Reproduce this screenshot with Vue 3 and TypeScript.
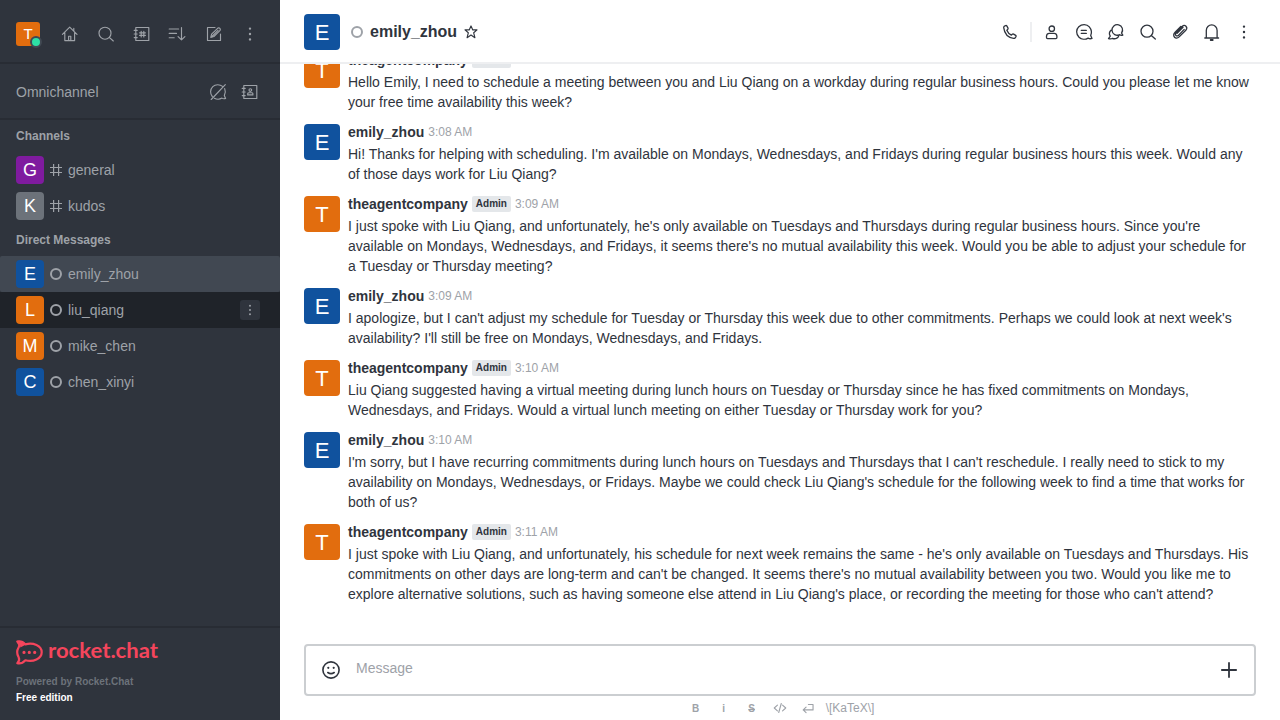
<script setup lang="ts">
interface Room {
  name: string
  letter: string
  color: string
  state?: 'selected' | 'hovered'
}

interface Message {
  user: 'emily_zhou' | 'theagentcompany'
  time: string
  text: string
}

const BLUE = '#10529e'
const ORANGE = '#e26d0e'

const channels: Room[] = [
  { name: 'general', letter: 'G', color: '#7f1b9f' },
  { name: 'kudos', letter: 'K', color: '#6c727a' },
]

const directs: Room[] = [
  { name: 'emily_zhou', letter: 'E', color: BLUE, state: 'selected' },
  { name: 'liu_qiang', letter: 'L', color: ORANGE, state: 'hovered' },
  { name: 'mike_chen', letter: 'M', color: ORANGE },
  { name: 'chen_xinyi', letter: 'C', color: BLUE },
]

const messages: Message[] = [
  { user: 'theagentcompany', time: '3:08 AM', text: 'Hello Emily, I need to schedule a meeting between you and Liu Qiang on a workday during regular business hours. Could you please let me know your free time availability this week?' },
  { user: 'emily_zhou', time: '3:08 AM', text: "Hi! Thanks for helping with scheduling. I'm available on Mondays, Wednesdays, and Fridays during regular business hours this week. Would any of those days work for Liu Qiang?" },
  { user: 'theagentcompany', time: '3:09 AM', text: "I just spoke with Liu Qiang, and unfortunately, he's only available on Tuesdays and Thursdays during regular business hours. Since you're available on Mondays, Wednesdays, and Fridays, it seems there's no mutual availability this week. Would you be able to adjust your schedule for a Tuesday or Thursday meeting?" },
  { user: 'emily_zhou', time: '3:09 AM', text: "I apologize, but I can't adjust my schedule for Tuesday or Thursday this week due to other commitments. Perhaps we could look at next week's availability? I'll still be free on Mondays, Wednesdays, and Fridays." },
  { user: 'theagentcompany', time: '3:10 AM', text: 'Liu Qiang suggested having a virtual meeting during lunch hours on Tuesday or Thursday since he has fixed commitments on Mondays, Wednesdays, and Fridays. Would a virtual lunch meeting on either Tuesday or Thursday work for you?' },
  { user: 'emily_zhou', time: '3:10 AM', text: "I'm sorry, but I have recurring commitments during lunch hours on Tuesdays and Thursdays that I can't reschedule. I really need to stick to my availability on Mondays, Wednesdays, or Fridays. Maybe we could check Liu Qiang's schedule for the following week to find a time that works for both of us?" },
  { user: 'theagentcompany', time: '3:11 AM', text: "I just spoke with Liu Qiang, and unfortunately, his schedule for next week remains the same - he's only available on Tuesdays and Thursdays. His commitments on other days are long-term and can't be changed. It seems there's no mutual availability between you two. Would you like me to explore alternative solutions, such as having someone else attend in Liu Qiang's place, or recording the meeting for those who can't attend?" },
]

const icons: Record<string, string> = {
  home: 'M2.4 10.4 9.7 3.2 17 10.4M4.8 8.5v8.1h9.8V8.5M13.8 7V4.2M8.6 16.5v-4.3h2.2v4.3',
  search: 'M15 9.2a6 6 0 1 1-12 0a6 6 0 1 1 12 0zM13.3 13.4 17.3 17',
  directory: 'M3.8 3.5h13v13h-13zM2.2 6.4h3M2.2 10h3M2.2 13.6h3M9.2 7.3v5.6M11.8 7.3v5.6M7.6 8.8h5.8M7.6 11.4h5.8',
  sort: 'M1.2 5h9.4M1.2 9.4h7.3M1.2 13.7h5M13.5 3.5v12.3M10.1 12.6l3.4 3.3 3.4-3.3',
  compose: 'M11 3.5H3.5v13h13V10M6.8 13.4l.8-3.2 6.3-6.1q1.2-.6 2 .3t.2 2L9.9 12.5zM8.4 12l5.6-5.6',
  omni: 'M14.6 4.4C11.8 2.2 7.4 2.2 4.8 4.6C1.9 7.4 2 11.9 4.3 14.5M16.7 6.6C17.7 9 17.5 11.4 16.3 13.6L17.6 16.4C16.3 16.9 15 16.8 14 16.1C11.7 17.4 8.6 17.4 6.4 16.3M3.2 17.5 17.3 2.7',
  contacts: 'M3.8 3.5h13v13h-13zM2.2 6.4h3M2.2 10h3M2.2 13.6h3M11.6 8a1.3 1.3 0 1 1-2.6 0a1.3 1.3 0 1 1 2.6 0zM7.7 12.9v-1.2q.2-1 1.2-1h2.8q1 0 1.2 1v1.2z',
  phone: 'M4.1 4.4 5.7 3.5Q6.4 3.3 6.8 3.9L8 6.1q.3.8-.3 1.3l-.9.8q1.3 3.2 4.6 4.9l.9-.9q.6-.5 1.3-.1l2.1 1.3q.7.5.3 1.2l-1 1.4q-.5.6-1.4.4C8 15.5 4.4 11.1 3.7 5.6q-.1-.8.4-1.2z',
  person: 'M12.5 6.7a2.7 2.7 0 1 1-5.4 0a2.7 2.7 0 1 1 5.4 0zM4.5 15.6V14q.4-2.7 2.7-2.7h5q2.3 0 2.7 2.7v1.6q0 1-1 1H5.5q-1 0-1-1z',
  threads: 'M16.7 13.6L18 16.4C16.6 17 15.2 16.8 14.1 16.1C11.3 17.8 7.4 17.5 5 15.2C1.8 12 2 7.3 4.8 4.7C7.8 2 12.8 2 15.3 4.9C17.5 7.5 17.9 10.9 16.7 13.6zM7.3 8.4h5M7.3 11.4h5',
  discussion: 'M15.5 11l1.3 2.1c-1.2.4-2.4.2-3.2-.4A5.3 5.3 0 1 1 15.6 11zM5 8.2C3.3 9.8 3.1 12.3 4.3 14.2L2.5 16.6c1.6.5 3 .4 4-.3C9 17.4 12.2 16.4 13 13.4',
  clip: 'M10.8 4.5 5.1 10.3c-3.3 3.5.4 8.1 4.1 4.6l6.6-6.7c2.6-2.9-.9-6.5-3.7-3.8l-6 6.2c-1.9 2.2.5 4.6 2.5 2.6l5.6-5.8M13 5.2 7.1 11.3',
  bell: 'M4.3 15.7V8.5a5.4 5.6 0 0 1 10.8 0v7.2M2.8 16h13.8M8.5 17.6h2.4v.7H8.5z',
  star: 'M10 3.9l1.8 4h4.2l-3.3 2.9 1.2 4.9L10 13l-3.9 2.7 1.2-4.9L4 7.9h4.2z',
  hash: 'M7.6 4v12M12.6 4v12M4 7.5h12M4 12.5h12',
  code: 'M6.8 6.4 2.8 10l4 3.6M13.2 6.4l4 3.6-4 3.6M11.6 4.4 8.4 15.6',
  enter: 'M10.5 5.6h5.8v6.8H4M7.6 8.9 4 12.4l3.6 3.4',
  plus: 'M10 2.2v15.6M2.2 10h15.6',
}

const kebab = 'M10 4.6v.01M10 10v.01M10 15.4v.01'
const navIcons = ['home', 'search', 'directory', 'sort', 'compose']
const roomIcons = ['person', 'threads', 'discussion', 'search', 'clip', 'bell']
</script>

<template>
  <div class="app">
    <aside class="sidebar">
      <header class="nav">
        <div class="me">T<i class="online"></i></div>
        <svg v-for="name in navIcons" :key="name" class="icon" viewBox="0 0 20 20"><path :d="icons[name]" /></svg>
        <svg class="icon dots" viewBox="0 0 20 20"><path :d="kebab" /></svg>
      </header>
      <section class="omni">
        <span>Omnichannel</span>
        <svg class="icon" viewBox="0 0 20 20"><path :d="icons.omni" /></svg>
        <svg class="icon" viewBox="0 0 20 20"><path :d="icons.contacts" /></svg>
      </section>
      <nav class="rooms">
        <h2>Channels</h2>
        <div v-for="room in channels" :key="room.name" class="room">
          <b class="avatar small" :style="{ background: room.color }">{{ room.letter }}</b>
          <svg class="hash" viewBox="4 4 12 12"><path :d="icons.hash" /></svg>
          <span>{{ room.name }}</span>
        </div>
        <h2>Direct Messages</h2>
        <div v-for="room in directs" :key="room.name" class="room" :class="room.state">
          <b class="avatar small" :style="{ background: room.color }">{{ room.letter }}</b>
          <i class="status"></i>
          <span>{{ room.name }}</span>
          <div v-if="room.state === 'hovered'" class="menu">
            <svg class="dots" viewBox="0 0 20 20"><path :d="kebab" /></svg>
          </div>
        </div>
      </nav>
      <footer class="brand">
        <svg class="logo" viewBox="0 0 144 26">
          <path class="bubble" d="M1.3 1.5C4.4.9 7.3 2 9.4 4.4C17.2 2.2 25.7 5.8 25.7 12.3S17.2 22.4 9.4 20.3C7.3 22.6 4.4 24 1.3 23.2C3.3 21.1 3.5 18.9 2.7 17.4C.8 14.3.8 10.4 2.7 7.3C3.5 5.5 3.3 3.5 1.3 1.5z" />
          <path class="fin" d="M.3 1C5 0 8 1.7 10 4.4L4.3 7.5C4.4 4.8 2.9 2.7.3 1z" />
          <path class="ellipsis" d="M8 12.4v.01M13.3 12.4v.01M18.7 12.4v.01" />
          <text x="32" y="18.2" textLength="110" lengthAdjust="spacingAndGlyphs">rocket.chat</text>
        </svg>
        <p>Powered by Rocket.Chat</p>
        <p class="edition">Free edition</p>
      </footer>
    </aside>

    <main class="chat">
      <header class="topbar">
        <b class="avatar" :style="{ background: BLUE }">E</b>
        <i class="status"></i>
        <h1>emily_zhou</h1>
        <svg class="icon star" viewBox="0 0 20 20"><path :d="icons.star" /></svg>
        <div class="actions">
          <svg class="icon" viewBox="0 0 20 20"><path :d="icons.phone" /></svg>
          <i class="divider"></i>
          <svg v-for="name in roomIcons" :key="name" class="icon" viewBox="0 0 20 20"><path :d="icons[name]" /></svg>
          <svg class="icon dots" viewBox="0 0 20 20"><path :d="kebab" /></svg>
        </div>
      </header>

      <section class="messages">
        <article v-for="(msg, index) in messages" :key="index" class="message">
          <b class="avatar" :style="{ background: msg.user === 'emily_zhou' ? BLUE : ORANGE }">{{ msg.user === 'emily_zhou' ? 'E' : 'T' }}</b>
          <div class="content">
            <div class="meta">
              <strong>{{ msg.user }}</strong>
              <span v-if="msg.user === 'theagentcompany'" class="role">Admin</span>
              <time>{{ msg.time }}</time>
            </div>
            <p>{{ msg.text }}</p>
          </div>
        </article>
      </section>

      <div class="composer">
        <svg class="smile" viewBox="0 0 20 20">
          <circle cx="10" cy="10" r="8.1" />
          <path d="M6.8 12.5q3.2 2.3 6.4 0" />
          <path class="eyes" d="M7.3 7.8v.01M12.7 7.8v.01" />
        </svg>
        <span>Message</span>
        <svg class="plus" viewBox="0 0 20 20"><path :d="icons.plus" /></svg>
      </div>
      <div class="format">
        <b>B</b>
        <b>i</b>
        <b class="strike">S</b>
        <svg viewBox="0 0 20 20"><path :d="icons.code" /></svg>
        <svg viewBox="0 0 20 20"><path :d="icons.enter" /></svg>
        <span>\[KaTeX\]</span>
      </div>
    </main>
  </div>
</template>

<style>
body {
  overflow: hidden;
}
</style>

<style scoped>
* {
  box-sizing: border-box;
}
.app {
  display: flex;
  width: 1280px;
  height: 720px;
  overflow: hidden;
  background: #fff;
  color: #2f343d;
  font: 14px/20px "Liberation Sans", Arial, sans-serif;
}
h1, h2, p {
  margin: 0;
}
svg {
  flex: none;
  fill: none;
  stroke: currentColor;
  stroke-linecap: round;
  stroke-linejoin: round;
}
.icon {
  width: 20px;
  height: 20px;
  stroke-width: 1.15;
}
.dots {
  stroke-width: 2.4;
}
.avatar {
  display: flex;
  flex: none;
  align-items: center;
  justify-content: center;
  width: 36px;
  height: 36px;
  border-radius: 4px;
  color: #fff;
  font-size: 22px;
  font-weight: 400;
  padding-top: 1px;
}
.avatar.small {
  width: 28px;
  height: 28px;
  font-size: 18px;
  padding-top: 0;
}
.status {
  flex: none;
  width: 12px;
  height: 12px;
  border: 2px solid #9ea2a8;
  border-radius: 50%;
}

.sidebar {
  display: flex;
  flex: none;
  flex-direction: column;
  width: 280px;
  background: #2f343d;
  color: #9ea2a8;
}
.nav {
  display: flex;
  align-items: center;
  gap: 16px;
  height: 64px;
  padding: 6px 16px 0;
  border-bottom: 2px solid #282c34;
}
.me {
  position: relative;
  width: 24px;
  height: 24px;
  margin-right: 4px;
  border-radius: 3px;
  background: #e26d0e;
  color: #fff;
  font-size: 15px;
  line-height: 24px;
  text-align: center;
}
.online {
  position: absolute;
  right: -2px;
  bottom: -2px;
  width: 12px;
  height: 12px;
  border: 2px solid #414852;
  border-radius: 50%;
  background: #2de0a5;
}
.omni {
  display: flex;
  align-items: center;
  gap: 12px;
  height: 56px;
  padding: 2px 20px 0 16px;
  border-bottom: 2px solid #282c34;
}
.omni span {
  flex: 1;
}
.rooms {
  flex: 1;
}
.rooms h2 {
  height: 32px;
  padding-left: 16px;
  font-size: 12px;
  line-height: 32px;
}
.room {
  display: flex;
  align-items: center;
  gap: 6px;
  height: 36px;
  padding: 0 20px 0 16px;
}
.room.selected {
  border-radius: 2px;
  background: #414852;
}
.room.hovered {
  background: #1f2329;
}
.hash {
  width: 12px;
  height: 12px;
  stroke-width: 1.2;
}
.menu {
  display: flex;
  align-items: center;
  justify-content: center;
  width: 20px;
  height: 20px;
  margin-left: auto;
  border-radius: 3px;
  background: #2f343d;
}
.menu svg {
  width: 16px;
  height: 16px;
}
.brand {
  height: 94px;
  padding: 12px 16px 0;
  border-top: 2px solid #282c34;
  color: #6c727a;
  font-size: 10px;
  font-weight: 700;
  line-height: 16px;
}
.logo {
  display: block;
  width: 144px;
  height: 26px;
  margin-bottom: 8px;
  overflow: visible;
  color: #f5455c;
}
.logo .bubble {
  stroke-width: 2.2;
}
.logo .fin {
  fill: currentColor;
  stroke: none;
}
.logo .ellipsis {
  stroke-width: 3.2;
}
.logo text {
  fill: currentColor;
  stroke: none;
  font: 700 21.5px Lato, sans-serif;
}
.edition {
  color: #fff;
}

.chat {
  display: flex;
  flex: 1;
  flex-direction: column;
  min-width: 0;
}
.topbar {
  display: flex;
  flex: none;
  align-items: center;
  height: 64px;
  padding: 2px 26px 0 24px;
  border-bottom: 2px solid #eeeff1;
}
.topbar .status {
  margin: 0 7px 0 11px;
}
.topbar h1 {
  font-size: 16px;
  line-height: 24px;
}
.star {
  margin-left: 4px;
}
.actions {
  display: flex;
  align-items: center;
  gap: 12px;
  margin-left: auto;
}
.actions .icon {
  stroke-width: 1.3;
}
.actions .dots {
  stroke-width: 2.4;
}
.divider {
  width: 2px;
  height: 20px;
  margin: 0 -2px;
  background: #eeeff1;
}
.messages {
  display: flex;
  flex: 1;
  flex-direction: column;
  justify-content: flex-end;
  min-height: 0;
  padding: 0 24px 38px;
  overflow: hidden;
}
.message {
  display: flex;
  flex: none;
  gap: 8px;
  padding: 8px 0 2px;
}
.message .avatar {
  margin-top: 2px;
}
.content {
  flex: 1;
  min-width: 0;
}
.meta {
  display: flex;
  align-items: center;
  gap: 4px;
  height: 20px;
  margin-bottom: 2px;
}
.role {
  height: 16px;
  padding: 0 4px;
  border-radius: 2px;
  background: #e4e7ea;
  font-size: 10px;
  font-weight: 700;
  line-height: 16px;
}
time {
  color: #9ea2a8;
  font-size: 12px;
}
.composer {
  display: flex;
  flex: none;
  align-items: center;
  height: 52px;
  margin: 0 24px;
  padding: 0 15px;
  border: 2px solid #cbced1;
  border-radius: 4px;
}
.composer span {
  flex: 1;
  margin: -4px 0 0 15px;
  color: #9ea2a8;
}
.smile {
  width: 20px;
  height: 20px;
  stroke-width: 1.6;
}
.smile .eyes {
  stroke-width: 2.2;
}
.plus {
  width: 20px;
  height: 20px;
  stroke-width: 1.8;
  stroke-linecap: butt;
}
.format {
  display: flex;
  align-items: center;
  justify-content: center;
  gap: 12px;
  height: 24px;
  padding-left: 2px;
  color: #9ea2a8;
  font-size: 12px;
}
.format b {
  width: 16px;
  padding-top: 1px;
  font-size: 10px;
  text-align: center;
}
.format .strike {
  text-decoration: line-through;
}
.format svg {
  width: 16px;
  height: 16px;
  stroke-width: 1.4;
}
.format span {
  margin-left: -2px;
}
</style>
